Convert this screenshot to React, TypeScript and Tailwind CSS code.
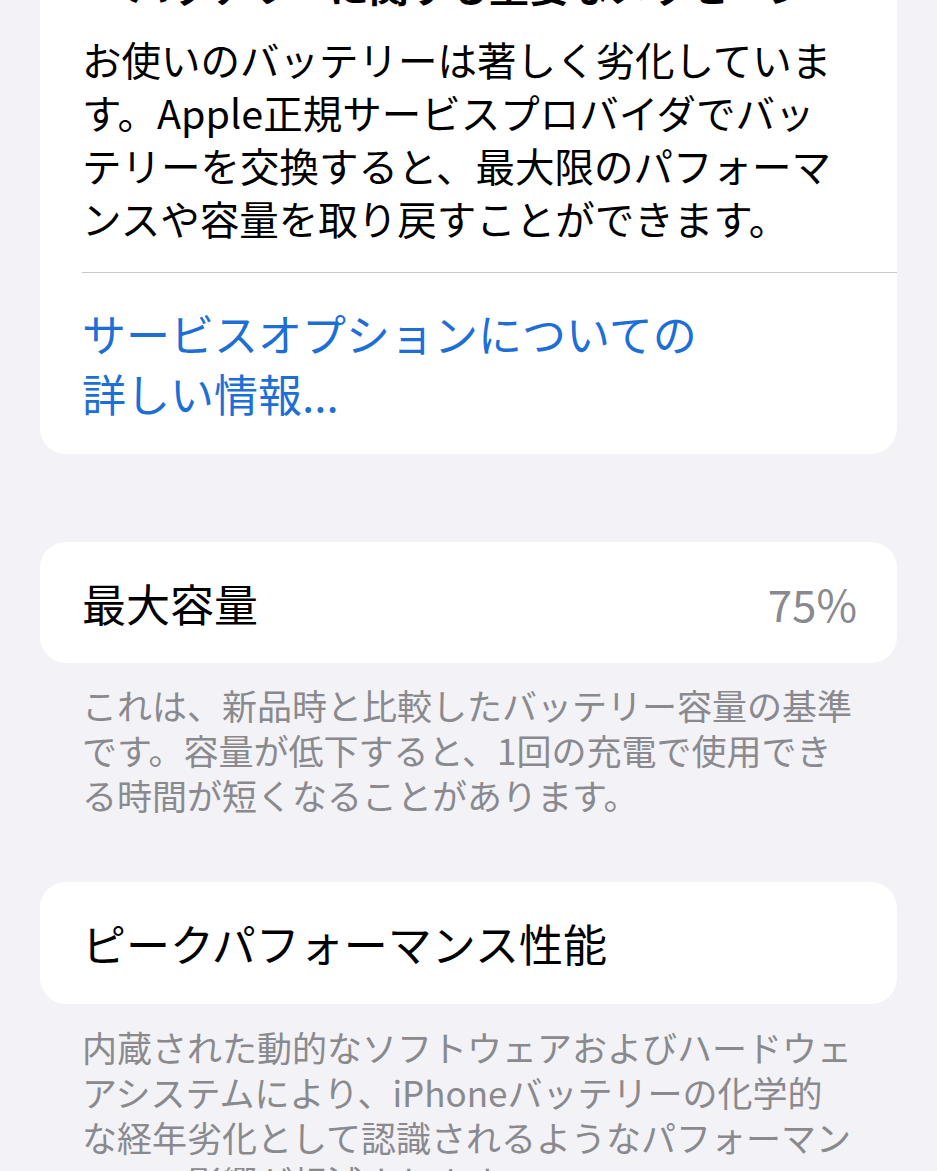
import React from "react";

const font = { fontFamily: '"Noto Sans CJK JP", "Noto Sans", sans-serif' };

export default function App() {
  return (
    <div
      className="min-h-screen overflow-hidden bg-[#f2f2f7] text-black"
      style={font}
    >
      <div className="px-[40px] pb-[200px]">
        {/* Top card */}
        <div className="-mt-[41px] rounded-b-[26px] bg-white pb-[31px]">
          <div className="h-[53px] whitespace-nowrap text-center text-[40px] font-bold leading-[53px]">
            バッテリーに関する重要なメッセージ
          </div>
          <div className="mt-[20px] whitespace-nowrap pl-[42px] text-[39.5px] leading-[53px]">
            <div>お使いのバッテリーは著しく劣化していま</div>
            <div>す。Apple正規サービスプロバイダでバッ</div>
            <div>テリーを交換すると、最大限のパフォーマ</div>
            <div>ンスや容量を取り戻すことができます。</div>
          </div>
          <div className="ml-[42px] mt-[28px] h-px bg-[#c8c8cc]" />
          <div className="mt-[30px] whitespace-nowrap pl-[42px] text-[44px] leading-[60px] text-[#1d6fd6]">
            <div>サービスオプションについての</div>
            <div>詳しい情報...</div>
          </div>
        </div>

        {/* Max capacity */}
        <div className="mt-[88px] flex h-[121px] items-center justify-between rounded-[26px] bg-white pl-[42px] pr-[40px]">
          <span className="text-[44px] leading-none">最大容量</span>
          <span className="text-[44px] leading-none text-[#8a8a8e]">75%</span>
        </div>
        <div className="mt-[19px] whitespace-nowrap pl-[42px] text-[35px] leading-[45px] text-[#8a8a8e]">
          <div>これは、新品時と比較したバッテリー容量の基準</div>
          <div>です。容量が低下すると、1回の充電で使用でき</div>
          <div>る時間が短くなることがあります。</div>
        </div>

        {/* Peak performance */}
        <div className="mt-[65px] flex h-[122px] items-center rounded-[26px] bg-white pl-[42px]">
          <span className="text-[44px] leading-none">ピークパフォーマンス性能</span>
        </div>
        <div className="mt-[20px] whitespace-nowrap pl-[42px] text-[35px] leading-[45px] text-[#8a8a8e]">
          <div>内蔵された動的なソフトウェアおよびハードウェ</div>
          <div>アシステムにより、iPhoneバッテリーの化学的</div>
          <div>な経年劣化として認識されるようなパフォーマン</div>
          <div>スへの影響が軽減されます。</div>
        </div>
      </div>
    </div>
  );
}
